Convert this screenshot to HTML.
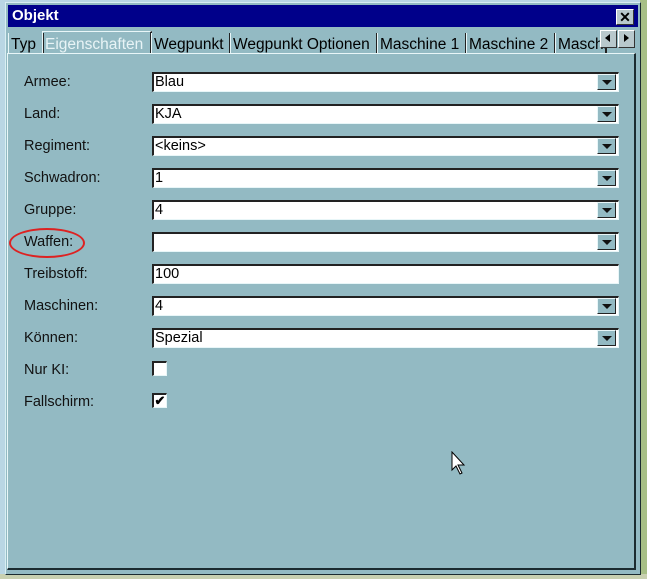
<!DOCTYPE html>
<html><head><meta charset="utf-8"><style>
body{margin:0;width:647px;height:579px;overflow:hidden;background:#b9d6e4;font-family:"Liberation Sans",Arial,sans-serif;position:relative}
.map{position:absolute;right:0;top:0;width:7px;height:579px;background:#a7bf86}
.mapb{position:absolute;left:0;bottom:0;width:647px;height:5px;background:#c8d0b0}
.win{position:absolute;left:5px;top:2px;width:634px;height:571px;background:#93bac3;border:1px solid #d8eef2;border-right-color:#1b2b30;border-bottom-color:#1b2b30}
.title{position:absolute;left:2px;top:2px;right:2px;height:22px;background:#00008a;color:#fff;font-weight:bold;font-size:15px;line-height:22px;padding-left:4px}
.close{position:absolute;right:4px;top:4px;width:16px;height:14px;background:#b8c8cc;border:1px solid #fff;border-right-color:#333;border-bottom-color:#333;color:#000;font-size:14px;line-height:14px;text-align:center;font-weight:bold}
.tab{position:absolute;top:30px;height:20px;font-size:15.5px;line-height:23px;color:#000;border-left:1px solid #e8f6f8;border-right:2px solid #222;padding:0 2px;white-space:nowrap;overflow:hidden}
.tab.sel{color:#e8f4f6;top:28px;height:22px;border-top:1px solid #e8f6f8;line-height:26px}
.panel{position:absolute;left:1px;top:50px;width:626px;height:514px;border:1px solid #e8f6f8;border-right:2px solid #1b2b30;border-bottom:2px solid #1b2b30}
.lbl{position:absolute;left:16px;font-size:14.5px;color:#111}
.fld{position:absolute;left:144px;width:463px;height:17px;background:#fff;border-top:2px solid #222;border-left:2px solid #222;border-bottom:1px solid #e8f6f8;border-right:1px solid #e8f6f8;font-size:14.5px;line-height:17px;padding-left:1px;box-sizing:content-box}
.btn{position:absolute;right:2px;top:0px;width:19px;height:16px;background:#93bac3;border:1px solid #e8f6f8;border-right-color:#222;border-bottom-color:#222;box-sizing:border-box}
.btn:after{content:"";position:absolute;left:4px;top:5px;border-left:5px solid transparent;border-right:5px solid transparent;border-top:5px solid #111}
.cb{position:absolute;left:144px;width:12px;height:12px;background:#fff;border-top:2px solid #222;border-left:2px solid #222;border-right:1px solid #e8f6f8;border-bottom:1px solid #e8f6f8;font-size:13px;line-height:12px;text-align:center;font-weight:bold}
.arr{position:absolute;top:27px;width:15px;height:16px;background:#b8c8cc;border:1px solid #fff;border-right-color:#333;border-bottom-color:#333}
</style></head><body>
<div class="map"></div><div class="mapb"></div>
<div class="win">
<div class="title">Objekt<div class="close">✕</div></div>
<div class="tab" style="left:2px;width:29px">Typ</div>
<div class="tab sel" style="left:36px;width:103px">Eigenschaften</div>
<div class="tab" style="left:145px;width:73px">Wegpunkt</div>
<div class="tab" style="left:224px;width:141px">Wegpunkt Optionen</div>
<div class="tab" style="left:371px;width:83px">Maschine 1</div>
<div class="tab" style="left:460px;width:83px">Maschine 2</div>
<div class="tab" style="left:549px;width:45px">Maschine 3</div>
<div class="arr" style="left:594px"><div style="position:absolute;left:4px;top:3px;border-top:4px solid transparent;border-bottom:4px solid transparent;border-right:5px solid #000"></div></div>
<div class="arr" style="left:612px"><div style="position:absolute;left:5px;top:3px;border-top:4px solid transparent;border-bottom:4px solid transparent;border-left:5px solid #000"></div></div>
<div class="panel">
<div class="lbl" style="top:20px">Armee:</div><div class="fld" style="top:18px">Blau<div class="btn"></div></div>
<div class="lbl" style="top:52px">Land:</div><div class="fld" style="top:50px">KJA<div class="btn"></div></div>
<div class="lbl" style="top:84px">Regiment:</div><div class="fld" style="top:82px">&lt;keins&gt;<div class="btn"></div></div>
<div class="lbl" style="top:116px">Schwadron:</div><div class="fld" style="top:114px">1<div class="btn"></div></div>
<div class="lbl" style="top:148px">Gruppe:</div><div class="fld" style="top:146px">4<div class="btn"></div></div>
<div class="lbl" style="top:180px">Waffen:</div><div class="fld" style="top:178px"><div class="btn"></div></div>
<div style="position:absolute;left:1px;top:174px;width:72px;height:26px;border:2px solid #d22;border-radius:50%"></div>
<div class="lbl" style="top:212px">Treibstoff:</div><div class="fld" style="top:210px">100</div>
<div class="lbl" style="top:244px">Maschinen:</div><div class="fld" style="top:242px">4<div class="btn"></div></div>
<div class="lbl" style="top:276px">Können:</div><div class="fld" style="top:274px">Spezial<div class="btn"></div></div>
<div class="lbl" style="top:308px">Nur KI:</div><div class="cb" style="top:307px"></div>
<div class="lbl" style="top:340px">Fallschirm:</div><div class="cb" style="top:339px">✔</div>
<svg style="position:absolute;left:443px;top:397px" width="16" height="26" viewBox="0 0 16 26"><path d="M1 1 L1 19 L5 15 L9 23 L11 22 L7 14 L13 14 Z" fill="#fff" stroke="#000" stroke-width="1"/></svg>
</div>
</div>
</body></html>
